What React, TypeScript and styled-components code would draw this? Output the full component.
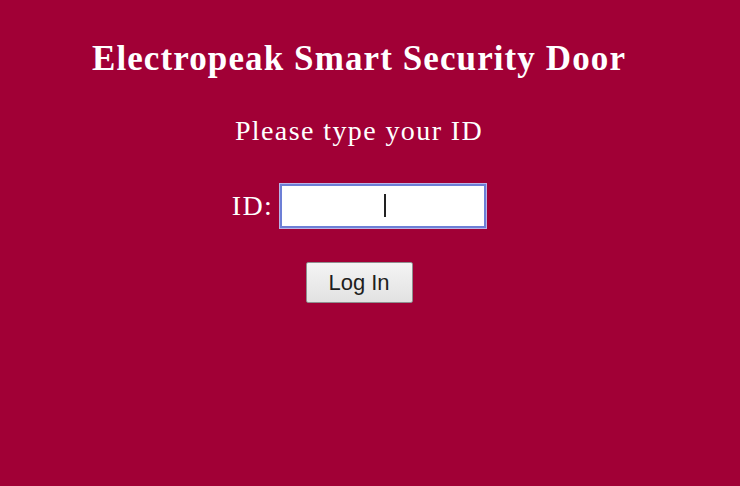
import React from "react"
import styled, { createGlobalStyle } from "styled-components"

const GlobalStyle = createGlobalStyle`
	html, body {
		margin: 0;
		padding: 0;
		background: #a10036;
	}
	body {
		font-family: "Liberation Serif", "Times New Roman", serif;
		color: #ffffff;
	}
`

const Page = styled.div`
	width: 740px;
	height: 486px;
	box-sizing: border-box;
	padding: 39px 22px 0 0;
	display: flex;
	flex-direction: column;
	align-items: center;
	background: #a10036;
`

const Title = styled.h1`
	margin: 0;
	font-size: 35px;
	letter-spacing: 1.1px;
	font-weight: bold;
	line-height: 40px;
`

const Prompt = styled.p`
	margin: 36px 0 0;
	font-size: 28px;
	letter-spacing: 1.4px;
	line-height: 32px;
`

const Form = styled.form`
	margin: 0;
	display: flex;
	flex-direction: column;
	align-items: center;
`

const Row = styled.div`
	margin-top: 37px;
	display: flex;
	align-items: center;
	gap: 7px;
`

const Label = styled.label`
	font-size: 28px;
	letter-spacing: 1.4px;
	line-height: 32px;
`

const InputBox = styled.div`
	position: relative;
	width: 206px;
	height: 44px;
`

const Input = styled.input`
	width: 100%;
	height: 100%;
	box-sizing: border-box;
	border: 2px solid #6d7fd6;
	outline: 1px solid #b9b4e8;
	background: #ffffff;
	text-align: center;
	font-family: "Liberation Sans", Arial, sans-serif;
	font-size: 20px;
	padding: 0 4px;
`

const Caret = styled.span`
	position: absolute;
	left: 104px;
	top: 10px;
	width: 2px;
	height: 23px;
	background: #222;
	pointer-events: none;
`

const Button = styled.button`
	margin-top: 34px;
	width: 107px;
	height: 41px;
	box-sizing: border-box;
	border: 1px solid #8f8f8f;
	border-radius: 2px;
	background: linear-gradient(#f4f4f4, #e2e2e2);
	font-family: "Liberation Sans", Arial, sans-serif;
	font-size: 22px;
	color: #1e1e1e;
	padding: 0;
`

export default function App() {
	return (
		<>
			<GlobalStyle />
			<Page>
				<Title>Electropeak Smart Security Door</Title>
				<Prompt>Please type your ID</Prompt>
				<Form onSubmit={(e) => e.preventDefault()}>
					<Row>
						<Label htmlFor="id">ID:</Label>
						<InputBox>
							<Input id="id" type="text" />
							<Caret />
						</InputBox>
					</Row>
					<Button type="submit">Log In</Button>
				</Form>
			</Page>
		</>
	)
}
